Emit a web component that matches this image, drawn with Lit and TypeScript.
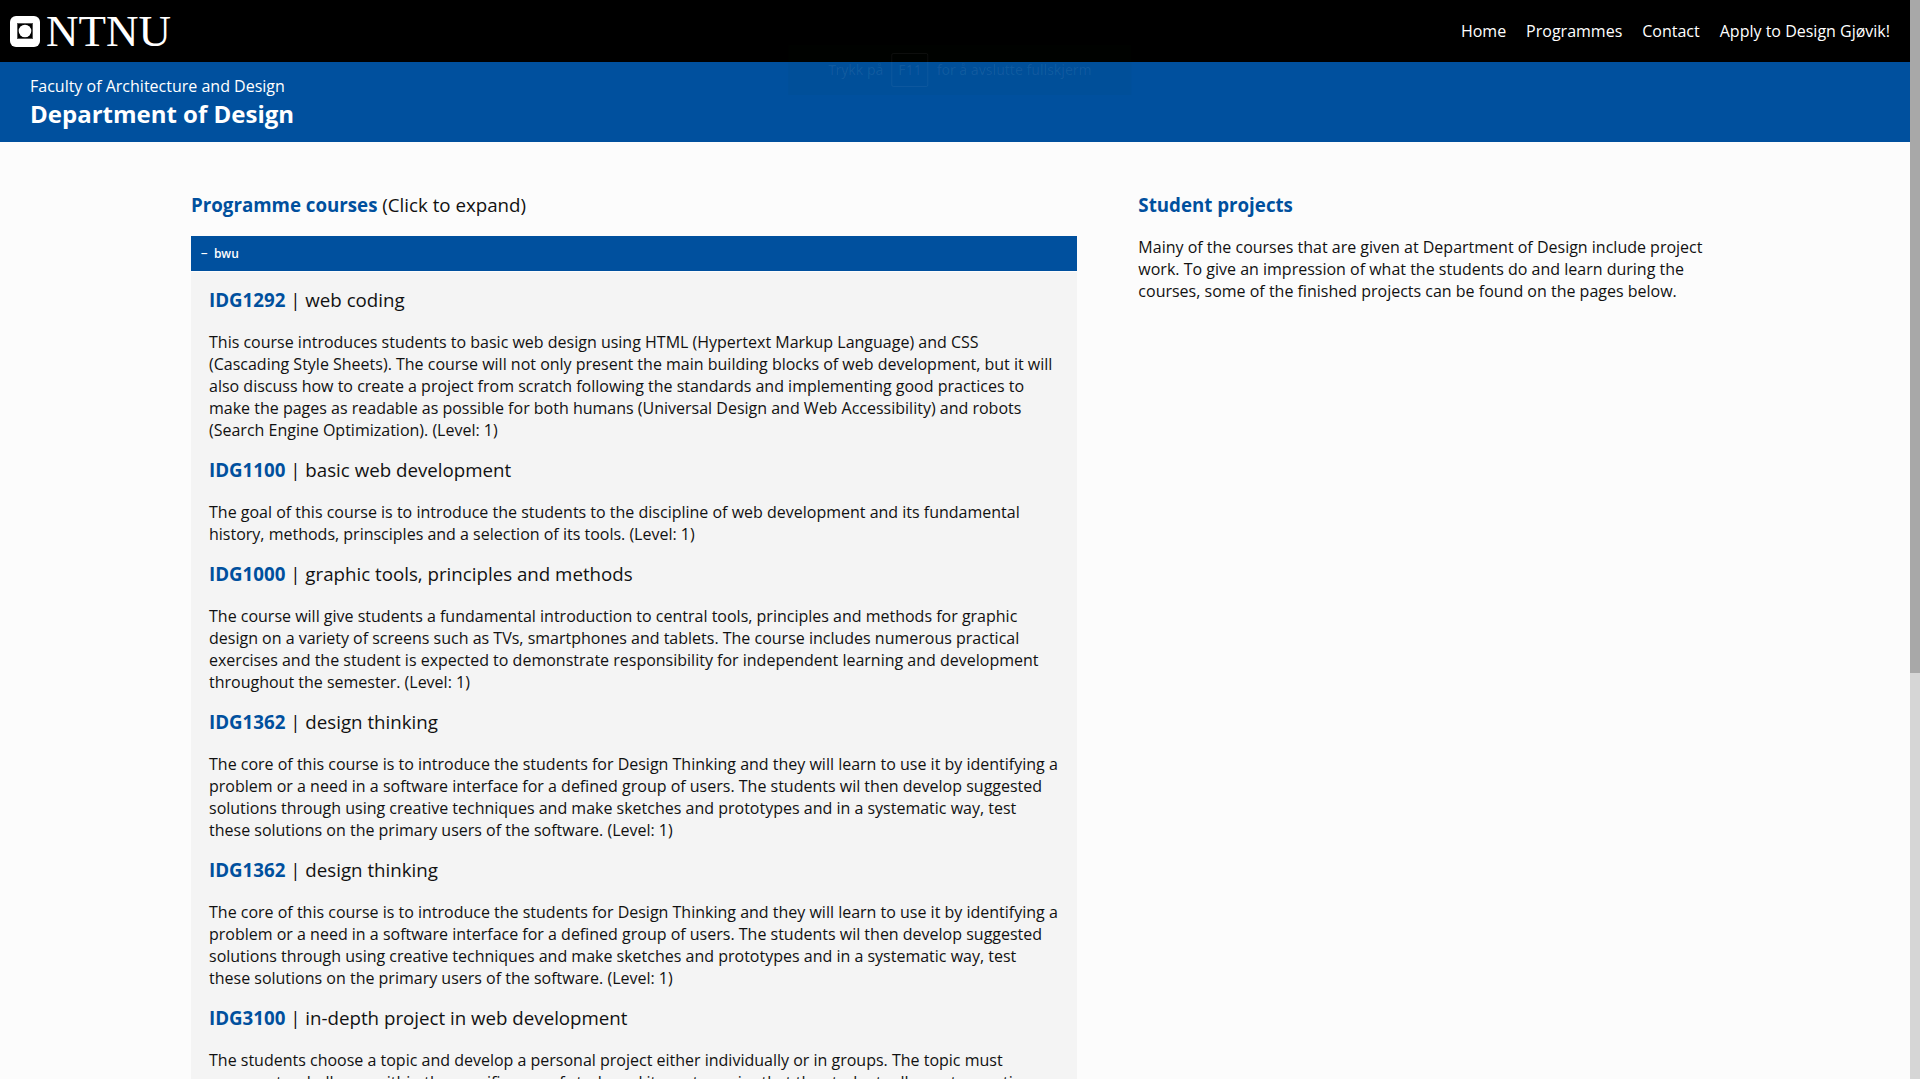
import { LitElement, html, css } from "lit";
import { customElement, state } from "lit/decorators.js";

interface Course {
  code: string;
  name: string;
  text: string;
}

const designThinking: Course = {
  code: "IDG1362",
  name: "design thinking",
  text: "The core of this course is to introduce the students for Design Thinking and they will learn to use it by identifying a problem or a need in a software interface for a defined group of users. The students wil then develop suggested solutions through using creative techniques and make sketches and prototypes and in a systematic way, test these solutions on the primary users of the software. (Level: 1)",
};

const courses: Course[] = [
  {
    code: "IDG1292",
    name: "web coding",
    text: "This course introduces students to basic web design using HTML (Hypertext Markup Language) and CSS (Cascading Style Sheets). The course will not only present the main building blocks of web development, but it will also discuss how to create a project from scratch following the standards and implementing good practices to make the pages as readable as possible for both humans (Universal Design and Web Accessibility) and robots (Search Engine Optimization). (Level: 1)",
  },
  {
    code: "IDG1100",
    name: "basic web development",
    text: "The goal of this course is to introduce the students to the discipline of web development and its fundamental history, methods, prinsciples and a selection of its tools. (Level: 1)",
  },
  {
    code: "IDG1000",
    name: "graphic tools, principles and methods",
    text: "The course will give students a fundamental introduction to central tools, principles and methods for graphic design on a variety of screens such as TVs, smartphones and tablets. The course includes numerous practical exercises and the student is expected to demonstrate responsibility for independent learning and development throughout the semester. (Level: 1)",
  },
  designThinking,
  designThinking,
  {
    code: "IDG3100",
    name: "in-depth project in web development",
    text: "The students choose a topic and develop a personal project either individually or in groups. The topic must represent a challenge within the specific area of study and it must require that the student adheres to practices",
  },
];

const links = ["Home", "Programmes", "Contact", "Apply to Design Gjøvik!"];

@customElement("app-root")
export class AppRoot extends LitElement {
  @state() private open = true;

  static styles = css`
    :host {
      display: grid;
      grid-template-columns: minmax(0, 1fr) 10px;
      height: 100vh;
      background: #fcfcfc;
      color: #111;
      font: 400 16px/22px "Open Sans", "Noto Sans", sans-serif;
    }
    .page {
      overflow-y: auto;
      scrollbar-width: none;
    }
    .track {
      background: #d6d6d6;
    }
    .thumb {
      height: 62.4%;
      background: #a8a8a8;
    }
    .bar {
      display: flex;
      align-items: center;
      justify-content: space-between;
      padding: 0 20px 0 10px;
      height: 62px;
      background: #000;
    }
    .logo {
      display: flex;
      align-items: center;
      gap: 6px;
      color: #fff;
      text-decoration: none;
    }
    .mark {
      display: block;
    }
    .wordmark {
      font: 400 45px/48px "Liberation Serif", serif;
    }
    .nav {
      display: flex;
      gap: 20px;
    }
    .link {
      color: #fff;
      text-decoration: none;
    }
    .banner {
      padding: 13px 30px 11px;
      background: #00509e;
      color: #fff;
    }
    .department {
      margin: 0;
      font-size: 24px;
      line-height: 34px;
      font-weight: 700;
    }
    .columns {
      display: grid;
      grid-template-columns: 58fr 38fr;
      column-gap: 4%;
      padding: 50px 10% 0;
    }
    .heading {
      margin: 0;
      line-height: 26px;
      font-weight: 400;
    }
    .strong {
      color: #00509e;
      font-weight: 700;
    }
    .toggle {
      display: flex;
      gap: 6px;
      width: 100%;
      margin-top: 18px;
      padding: 10px;
      border: 0;
      background: #00509e;
      color: #fff;
      text-align: left;
      font: 600 12px/15px "Open Sans", sans-serif;
    }
    .panel {
      margin-top: 1px;
      padding: 15px 18px;
      background: #f4f4f4;
    }
    .text {
      margin: 18px 0 16px;
    }
    .hint {
      position: absolute;
      top: 45px;
      left: 50%;
      transform: translateX(-50%);
      display: flex;
      align-items: center;
      gap: 8px;
      padding: 8px 40px;
      background: rgba(0, 60, 0, 0.03);
      color: rgba(255, 255, 255, 0.07);
      font: 400 14px/34px "Noto Sans", sans-serif;
      white-space: nowrap;
      pointer-events: none;
    }
    .key {
      padding: 0 6px;
      border: 1px solid rgba(255, 255, 255, 0.05);
      border-radius: 2px;
      line-height: 32px;
    }
  `;

  render() {
    return html`
      <div class="page">
        <header>
          <div class="bar">
            <a class="logo" href="#" aria-label="NTNU">
              <svg class="mark" width="30" height="31" viewBox="0 0 30 31" aria-hidden="true">
                <rect width="30" height="31" rx="6" fill="#fff" />
                <rect x="7.5" y="7.5" width="15" height="15" fill="#000" stroke="#555" />
                <circle cx="15" cy="15" r="6.3" fill="#fff" />
              </svg>
              <span class="wordmark">NTNU</span>
            </a>
            <nav class="nav">
              ${links.map((l) => html`<a class="link" href="#">${l}</a>`)}
            </nav>
          </div>
          <div class="banner">
            <div>Faculty of Architecture and Design</div>
            <h1 class="department">Department of Design</h1>
          </div>
        </header>
        <main class="columns">
          <section>
            <h3 class="heading"><span class="strong">Programme courses</span> (Click to expand)</h3>
            <button class="toggle" aria-expanded=${this.open} @click=${() => (this.open = !this.open)}>
              <span>${this.open ? "−" : "+"}</span><span>bwu</span>
            </button>
            ${this.open
              ? html`<div class="panel">
                  ${courses.map(
                    (c) => html`
                      <h3 class="heading"><span class="strong">${c.code}</span> | ${c.name}</h3>
                      <p class="text">${c.text}</p>
                    `
                  )}
                </div>`
              : null}
          </section>
          <section>
            <h3 class="heading"><span class="strong">Student projects</span></h3>
            <p class="text">
              Mainy of the courses that are given at Department of Design include project work. To give an
              impression of what the students do and learn during the courses, some of the finished projects can be
              found on the pages below.
            </p>
          </section>
        </main>
      </div>
      <div class="track"><div class="thumb"></div></div>
      <div class="hint"><span>Trykk på</span><span class="key">F11</span><span>for å avslutte fullskjerm</span></div>
    `;
  }
}
